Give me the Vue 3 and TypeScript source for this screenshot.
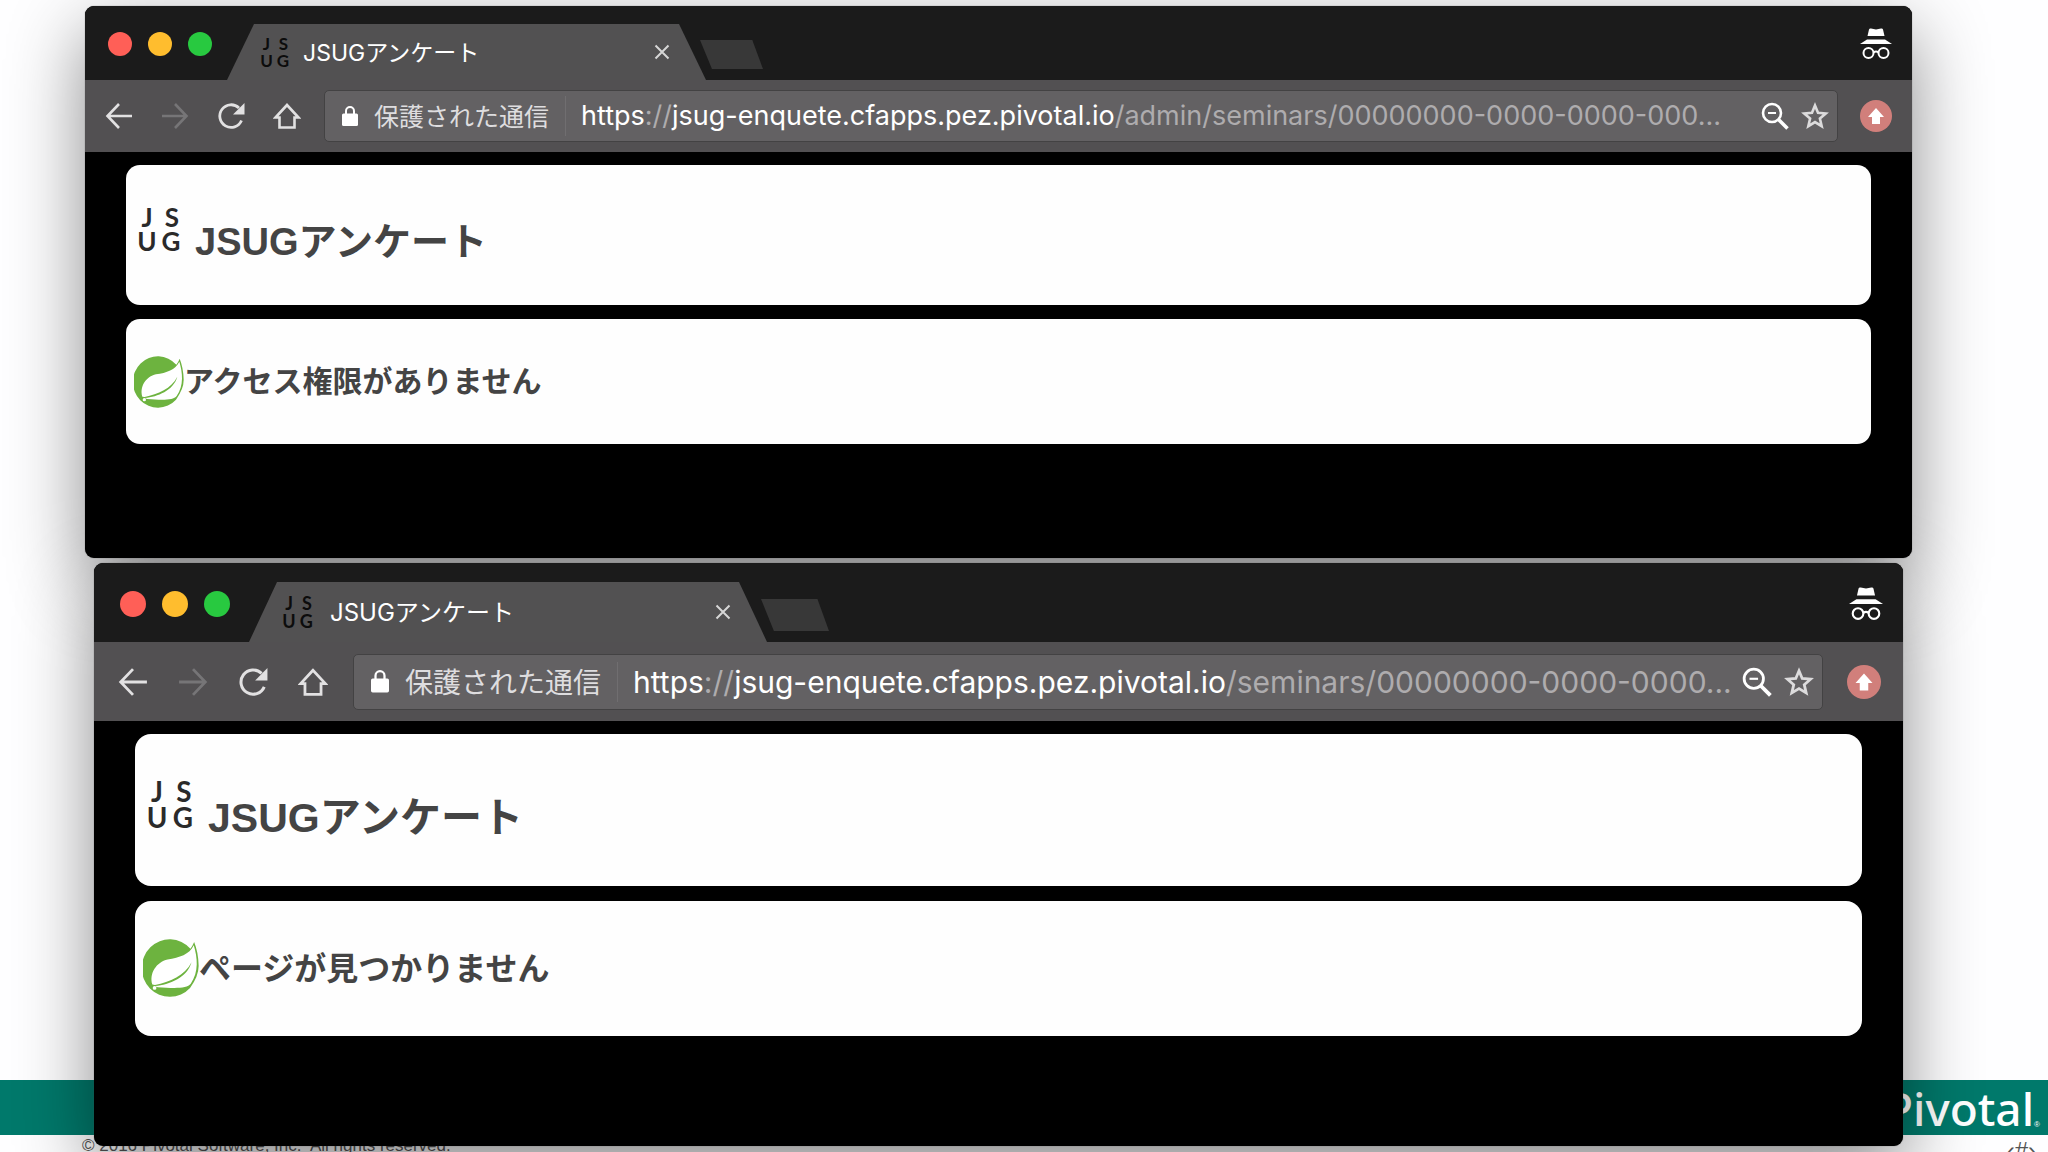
<script setup lang="ts">
interface BrowserWindow {
  id: string
  title: string
  path: string
  message: string
}

const scheme = 'https'
const host = 'jsug-enquete.cfapps.pez.pivotal.io'

const windows: BrowserWindow[] = [
  {
    id: 'denied',
    title: 'JSUGアンケート',
    path: '/admin/seminars/00000000-0000-0000-000...',
    message: 'アクセス権限がありません',
  },
  {
    id: 'missing',
    title: 'JSUGアンケート',
    path: '/seminars/00000000-0000-0000...',
    message: 'ページが見つかりません',
  },
]
</script>

<template>
  <main class="slide">
    <footer class="footer">
      <div class="band">
        <span class="brand">Pivotal</span><span class="reg">®</span>
      </div>
      <div class="legal">
        <span class="copyright">© 2016 Pivotal Software, Inc.&nbsp; All rights reserved.</span>
        <span class="page-number">‹#›</span>
      </div>
    </footer>

    <section v-for="win in windows" :key="win.id" class="window" :class="win.id">
      <header class="titlebar">
        <div class="lights">
          <button class="light red" type="button" aria-label="Close window"></button>
          <button class="light yellow" type="button" aria-label="Minimize window"></button>
          <button class="light green" type="button" aria-label="Zoom window"></button>
        </div>
        <div class="tab">
          <svg class="favicon" viewBox="0 0 56 56" aria-hidden="true">
            <text x="14" y="25">J</text>
            <text x="42" y="25">S</text>
            <text x="14" y="53">U</text>
            <text x="41" y="53">G</text>
          </svg>
          <span class="tab-title">{{ win.title }}</span>
          <button class="tab-close" type="button" aria-label="Close tab">
            <svg viewBox="0 0 16 16"><path d="M1.500 1.500l13 13M14.500 1.500l-13 13" fill="none" stroke="#d6d6d6" stroke-width="2" /></svg>
          </button>
        </div>
        <button class="new-tab" type="button" aria-label="New tab"></button>
        <svg class="incognito" viewBox="0 0 32 32" aria-hidden="true">
          <path d="M9 1.500q.5-1.500 2-1l5 1 5-1q1.500-.5 2 1L24.500 8h-17z" fill="#fff" />
          <path d="M7 11.500h18l7 4.500H0z" fill="#fff" />
          <g fill="none" stroke="#fff" stroke-width="2">
            <circle cx="8.500" cy="25" r="5" />
            <circle cx="23.500" cy="25" r="5" />
            <path d="M13.500 24.500q2.500-2 5 0" />
          </g>
        </svg>
      </header>

      <nav class="toolbar" aria-label="Browser">
        <button class="tool" type="button" aria-label="Back">
          <svg viewBox="0 0 28 28"><path d="M27 14H3M14 2L2.500 14 14 26" fill="none" stroke="#e2e1e2" stroke-width="2.600" /></svg>
        </button>
        <button class="tool" type="button" aria-label="Forward" disabled>
          <svg viewBox="0 0 28 28"><path d="M1 14h24M14 2l11.500 12L14 26" fill="none" stroke="#767577" stroke-width="2.600" /></svg>
        </button>
        <button class="tool" type="button" aria-label="Reload">
          <svg viewBox="0 0 28 28">
            <path d="M24.500 18.500A11.300 11.300 0 1 1 22 6" fill="none" stroke="#e2e1e2" stroke-width="2.800" />
            <path d="M27.500 1v11.500H16z" fill="#e2e1e2" />
          </svg>
        </button>
        <button class="tool" type="button" aria-label="Home">
          <svg viewBox="0 0 28 28"><path d="M14 3L2.500 15.500h4v10h15v-10h4z" fill="none" stroke="#e2e1e2" stroke-width="2.600" /></svg>
        </button>

        <div class="omnibox">
          <svg class="lock" viewBox="0 0 16 20" aria-hidden="true">
            <rect x="0" y="7.500" width="16" height="12.500" rx="1.500" fill="#fff" />
            <path d="M4 8.500V5a4 4 0 0 1 8 0v3.500" fill="none" stroke="#fff" stroke-width="2" />
          </svg>
          <span class="secure">保護された通信</span>
          <div class="url" role="textbox" contenteditable="true" spellcheck="false" aria-label="Address">{{ scheme }}<span class="dim">://</span>{{ host }}<span class="dim">{{ win.path }}</span></div>
          <button class="mini" type="button" aria-label="Zoom level">
            <svg viewBox="0 0 28 28">
              <circle cx="11" cy="11" r="9" fill="none" stroke="#fff" stroke-width="2.600" />
              <path d="M7 11h8" stroke="#fff" stroke-width="2" />
              <path d="M17.500 17.500L26.500 26.500" stroke="#fff" stroke-width="3.600" />
            </svg>
          </button>
          <button class="mini" type="button" aria-label="Bookmark">
            <svg viewBox="0 0 28 28"><path d="M14 3.500l3 7.200 7.800.7-5.900 5.100 1.800 7.700L14 20.100l-6.700 4.100 1.800-7.700-5.900-5.100 7.800-.7z" fill="none" stroke="#dcdbdc" stroke-width="2.600" /></svg>
          </button>
        </div>

        <button class="extension" type="button" aria-label="Update">
          <svg viewBox="0 0 32 32">
            <circle cx="16" cy="16" r="16" fill="#d17f7b" />
            <path d="M16 8l8 9h-4v7h-8v-7H8z" fill="#fff" />
          </svg>
        </button>
      </nav>

      <div class="content">
        <article class="card heading-card">
          <svg class="logo" viewBox="0 0 56 56" aria-hidden="true">
            <text x="15" y="28">J</text>
            <text x="40" y="28">S</text>
            <text x="15" y="52">U</text>
            <text x="39" y="52">G</text>
          </svg>
          <h1>{{ win.title }}</h1>
        </article>
        <article class="card status-card">
          <svg class="leaf" viewBox="0 0 150 156" aria-hidden="true">
            <path d="M127 26A75 77 0 1 0 126 131Q150 98 149 70Q148 35 137 8Q133 18 127 26z" fill="#6db33f" />
            <path d="M25 122C16 92 36 62 66 55C98 50 124 42 136 17C146 50 150 88 128 120C118 134 80 132 40 129Q34 128 33 126C70 122 118 104 130 62C112 98 72 114 32 123z" fill="#fff" />
            <circle cx="31" cy="131" r="5" fill="#fff" />
          </svg>
          <h2>{{ win.message }}</h2>
        </article>
      </div>
    </section>
  </main>
</template>

<style>
body {
  margin: 0;
  background: #fff;
}
</style>

<style scoped>
.slide {
  position: relative;
  box-sizing: border-box;
  height: 100vh;
  padding-top: 6px;
  overflow: hidden;
  background: #fefeff;
  font-family: Inter, "Noto Sans CJK JP", sans-serif;
}

button {
  display: block;
  flex: none;
  padding: 0;
  border: 0;
  background: none;
}

svg {
  display: block;
  flex: none;
}

/* slide footer, behind the windows */
.footer {
  position: absolute;
  right: 0;
  bottom: 0;
  left: 0;
  height: 72px;
}

.band {
  display: flex;
  align-items: center;
  justify-content: flex-end;
  height: 55px;
  padding-right: 8px;
  background: #00796b;
  color: #fff;
}

.brand {
  font: 500 46px/58px "Noto Sans", sans-serif;
}

.reg {
  align-self: flex-end;
  font: 8px/20px "Liberation Sans", sans-serif;
}

.legal {
  display: flex;
  justify-content: space-between;
  height: 17px;
  padding: 0 12px 0 82px;
  color: #555;
  font: 17px/22px "Liberation Sans", Arial, sans-serif;
}

.page-number {
  font-size: 24px;
  line-height: 32px;
}

/* browser windows */
.window {
  position: relative;
  display: flex;
  flex-direction: column;
  border-radius: 9px;
  background: #000;
  box-shadow: 0 0 1px #555, 0 26px 76px rgba(0, 0, 0, 0.46);
}

.denied {
  --bar: 74px;
  --tools: 72px;
  --pad: 23px;
  --light: 24px;
  --tab-gap: 15px;
  --tab-w: 479px;
  --tab-h: 56px;
  --slant: 27px;
  --new-w: 63px;
  --new-h: 29px;
  --favicon: 34px;
  --tab-font: 23px;
  --badge: 32px;
  --icon: 28px;
  --box-h: 52px;
  --lock: 16px;
  --url-font: 27px;
  --secure-font: 25px;
  --side: 41px;
  --inset: 13px;
  --gap: 14px;
  --card-1: 140px;
  --card-2: 125px;
  --logo: 56px;
  --logo-top: 34px;
  --h1: 38px;
  --h2: 30px;
  --leaf: 50px;
  --radius: 14px;
  height: 552px;
  margin: 0 136px 5px 85px;
}

.missing {
  --bar: 79px;
  --tools: 79px;
  --pad: 26px;
  --light: 26px;
  --tab-gap: 19px;
  --tab-w: 518px;
  --tab-h: 60px;
  --slant: 28px;
  --new-w: 68px;
  --new-h: 32px;
  --favicon: 36px;
  --tab-font: 24px;
  --badge: 34px;
  --icon: 30px;
  --box-h: 56px;
  --lock: 18px;
  --url-font: 30px;
  --secure-font: 28px;
  --side: 41px;
  --inset: 13px;
  --gap: 15px;
  --card-1: 152px;
  --card-2: 135px;
  --logo: 60px;
  --logo-top: 38px;
  --h1: 41px;
  --h2: 32px;
  --leaf: 56px;
  --radius: 16px;
  height: 583px;
  margin: 0 145px 0 94px;
}

.titlebar {
  display: flex;
  align-items: flex-end;
  height: var(--bar);
  padding: 0 20px 0 var(--pad);
  border-radius: 9px 9px 0 0;
  background: #1b1b1b;
}

.lights {
  display: flex;
  align-self: center;
  gap: 16px;
  padding-top: 2px;
}

.light {
  width: var(--light);
  height: var(--light);
  border-radius: 50%;
}

.red {
  background: #ff5f57;
}

.yellow {
  background: #ffbd2e;
}

.green {
  background: #28c940;
}

.tab {
  box-sizing: border-box;
  display: flex;
  align-items: center;
  width: var(--tab-w);
  height: var(--tab-h);
  margin-left: var(--tab-gap);
  padding: 0 36px 0 31px;
  background: #525152;
  clip-path: polygon(0 100%, var(--slant) 0, calc(100% - var(--slant)) 0, 100% 100%);
}

.favicon {
  width: var(--favicon);
  height: var(--favicon);
  fill: #0c0c0c;
  font: 700 28px Lato, sans-serif;
  text-anchor: middle;
}

.tab-title {
  flex: 1;
  padding: 0 0 3px 11px;
  color: #fff;
  font-size: var(--tab-font);
  white-space: nowrap;
}

.missing .tab-title {
  padding-left: 14px;
}

.tab-close {
  width: 16px;
  height: 16px;
}

.new-tab {
  width: var(--new-w);
  height: var(--new-h);
  margin: 0 0 11px -6px;
  background: #383838;
  clip-path: polygon(0 0, 83% 0, 100% 100%, 19% 100%);
}

.incognito {
  align-self: center;
  width: var(--badge);
  height: var(--badge);
  padding-top: 2px;
  margin-left: auto;
}

.toolbar {
  display: flex;
  align-items: center;
  gap: var(--icon);
  height: var(--tools);
  padding: 0 20px;
  background: #525052;
}

.missing .toolbar {
  padding: 0 22px 0 24px;
}

.tool,
.tool svg,
.mini,
.mini svg {
  width: var(--icon);
  height: var(--icon);
}

.omnibox {
  box-sizing: border-box;
  display: flex;
  flex: 1;
  align-items: center;
  min-width: 0;
  height: var(--box-h);
  margin: 0 -6px 0 -5px;
  padding: 0 8px 0 17px;
  border: 1px solid #434243;
  border-radius: 5px;
  background: #636163;
}

.lock {
  width: var(--lock);
  margin-right: 16px;
}

.secure {
  flex: none;
  padding-bottom: 2px;
  color: #dedddf;
  font-size: var(--secure-font);
}

.url {
  flex: 1;
  min-width: 0;
  margin-left: 16px;
  padding-left: 15px;
  border-left: 1px solid #706e70;
  outline: 0;
  overflow: hidden;
  color: #fff;
  font-size: var(--url-font);
  line-height: 40px;
  white-space: nowrap;
}

.dim {
  color: #aeacae;
}

.mini + .mini {
  margin-left: 12px;
}

.extension,
.extension svg {
  width: var(--badge);
  height: var(--badge);
}

/* page shown in the window */
.content {
  display: flex;
  flex-direction: column;
  gap: var(--gap);
  padding: var(--inset) var(--side);
}

.card {
  box-sizing: border-box;
  display: flex;
  border-radius: var(--radius);
  background: #fefefe;
  color: #444;
}

.heading-card {
  align-items: baseline;
  height: var(--card-1);
  padding: var(--logo-top) 6px 0;
}

.status-card {
  align-items: center;
  height: var(--card-2);
  padding: 0 8px;
}

.logo {
  width: var(--logo);
  height: var(--logo);
  fill: #2a2a2a;
  font: 700 26px Lato, sans-serif;
  text-anchor: middle;
}

.leaf {
  width: var(--leaf);
}

h1,
h2 {
  margin: 0;
  font-family: "Liberation Sans", "Noto Sans CJK JP", sans-serif;
  font-weight: 700;
  white-space: nowrap;
}

h1 {
  margin-left: 7px;
  font-size: var(--h1);
  line-height: 48px;
}

h2 {
  font-size: var(--h2);
  line-height: 48px;
}
</style>
